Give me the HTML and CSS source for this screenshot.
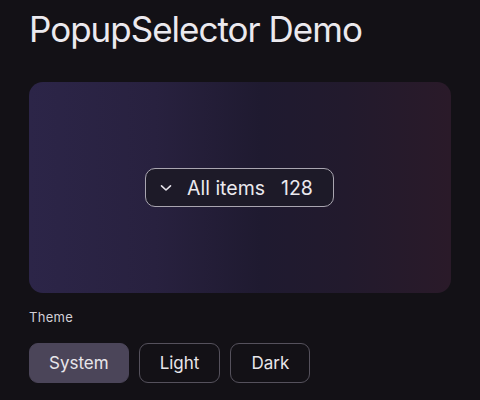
FILE: index.html
```html
<!DOCTYPE html>
<html>
<head>
<meta charset="utf-8">
<link rel="stylesheet" href="styles.css">
</head>
<body>
<main class="page">
  <h1 class="title">PopupSelector Demo</h1>
  <section class="card">
    <button class="selector">
      <svg class="chev" width="12" height="8" viewBox="0 0 12 8"><path d="M1.5 1.8 L6 6 L10.5 1.8" fill="none" stroke="#e6e3ea" stroke-width="1.6" stroke-linecap="round" stroke-linejoin="round"/></svg>
      <span class="label">All items</span>
      <span class="count">128</span>
    </button>
  </section>
  <div class="theme-label">Theme</div>
  <div class="segments">
    <button class="seg active">System</button>
    <button class="seg">Light</button>
    <button class="seg">Dark</button>
  </div>
</main>
</body>
</html>
```

FILE: styles.css
```css
html, body {
  margin: 0;
  padding: 0;
  background: #131116;
  height: 100%;
}
body {
  font-family: Inter, "Noto Sans", sans-serif;
  color: #e8e6ea;
}
.page {
  padding: 7px 29px 0 29px;
}
.title {
  margin: 0;
  font-size: 35px;
  line-height: 44px;
  font-weight: 400;
  letter-spacing: -1px;
  color: #ebe9ee;
}
.card {
  margin-top: 31px;
  width: 422px;
  height: 211px;
  border-radius: 14px;
  background: linear-gradient(90deg, #2c2548 0%, #28213f 30%, #1f1a30 55%, #221a2d 75%, #2a1a29 100%);
  display: flex;
  align-items: center;
  justify-content: center;
}
.selector {
  box-sizing: border-box;
  width: 189px;
  height: 39px;
  margin-left: -1px;
  border: 1.5px solid #a9a5b0;
  border-radius: 10px;
  background: #1d1a28;
  color: #ebe9ee;
  font-family: inherit;
  font-size: 19.5px;
  display: flex;
  align-items: center;
  padding: 0 0 0 14px;
}
.chev {
  margin-right: 15px;
}
.label {
  margin-right: 16px;
}
.theme-label {
  margin-top: 14px;
  font-size: 13px;
  line-height: 20px;
  color: #d2cfd6;
  letter-spacing: 0.3px;
}
.segments {
  margin-top: 16px;
  display: flex;
  gap: 10px;
}
.seg {
  box-sizing: border-box;
  height: 40px;
  padding: 0 20px;
  border: 1px solid #55515c;
  border-radius: 9px;
  background: transparent;
  color: #e8e6ea;
  font-family: inherit;
  font-size: 17px;
}
.seg.active {
  background: #4b4559;
  border-color: #4b4559;
  padding: 0 19px;
}
```
